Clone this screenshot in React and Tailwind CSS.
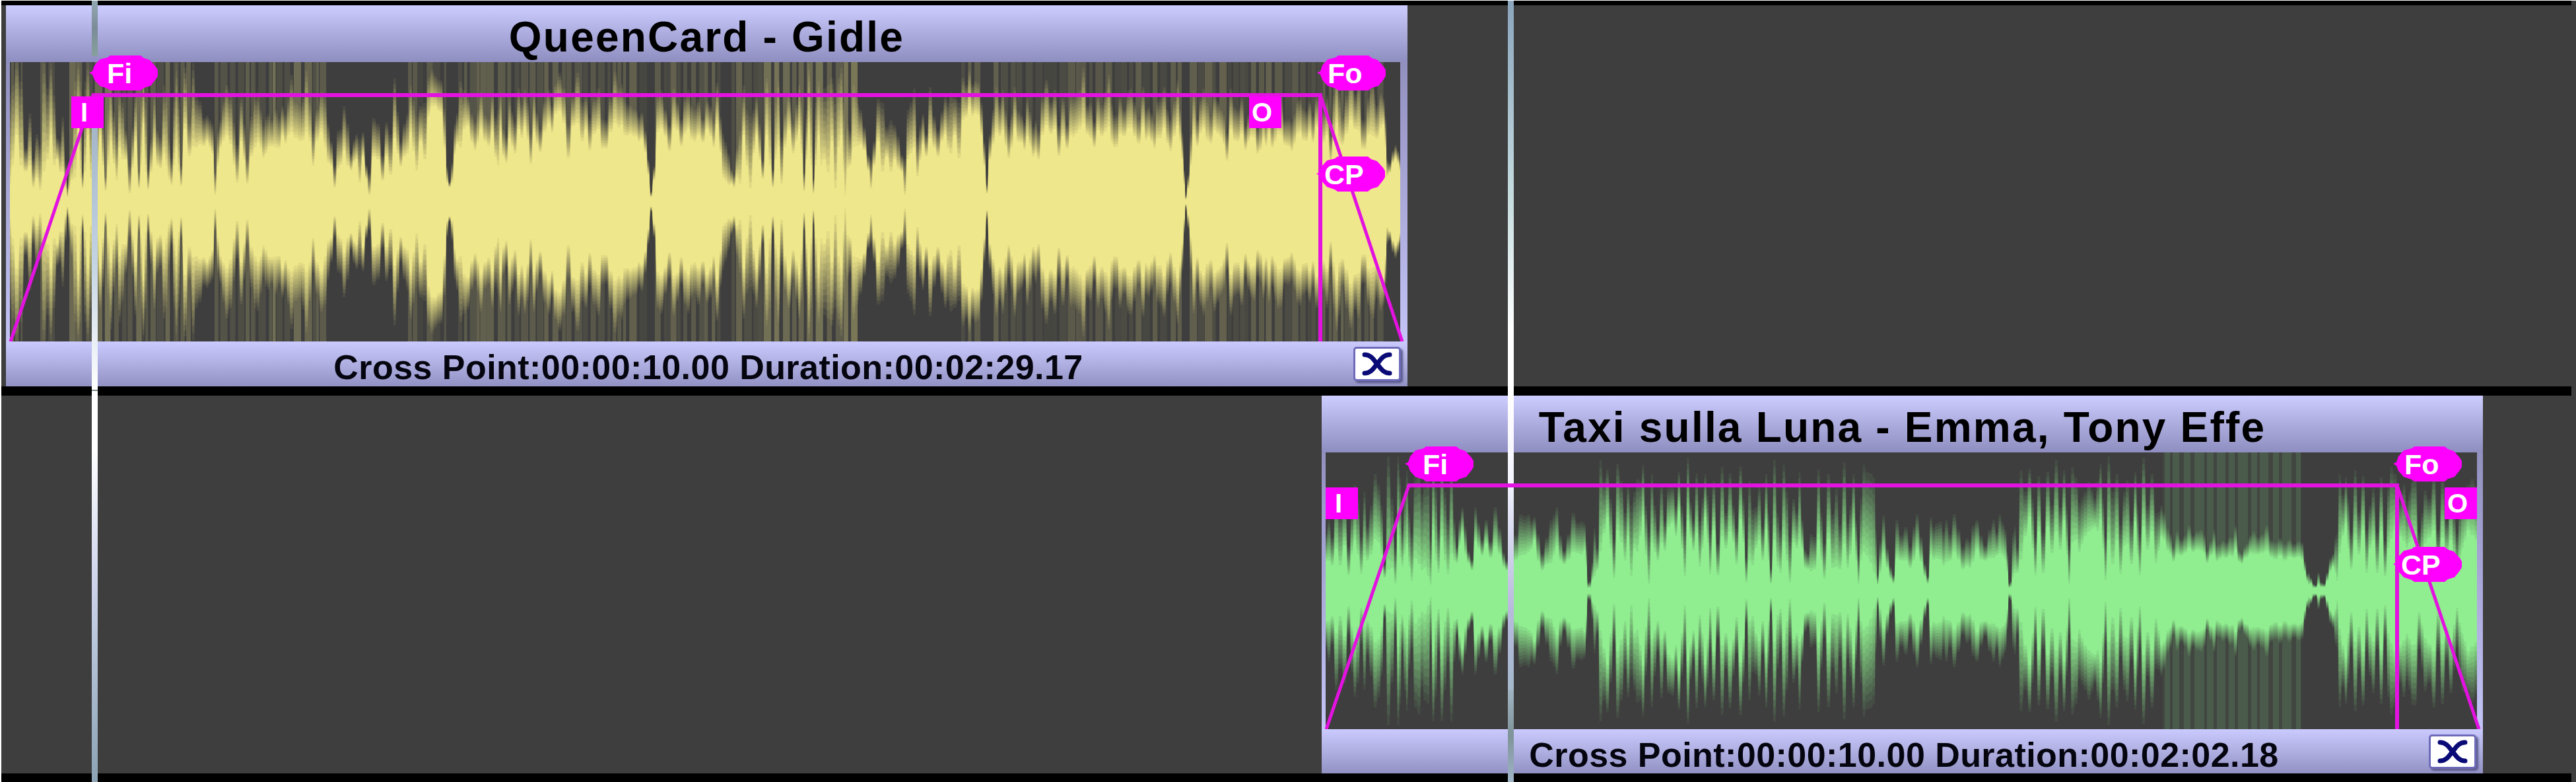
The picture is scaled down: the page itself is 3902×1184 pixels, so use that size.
import { useMemo } from 'react';

// Envelope points: "x core peak", x on the timeline, heights from the centre line.
// Between core and peak the wave fades out.
const QUEENCARD_WAVE = `
15 30 150, 19 60 165, 25 110 200, 32 60 170, 39 50 75, 46 60 125, 50 24 60, 56 40 95, 61 20 80, 66 50 195, 73 70 160, 77 110 200,
82 60 150, 87 70 90, 95 50 120, 100 22 55, 102 8 22, 105 20 50, 108 36 75, 114 40 170, 119 120 212, 122 40 170, 125 22 42, 129 50 170, 133 110 200, 138 40 150,
147 50 120, 152 110 150, 156 60 120, 160 18 34, 164 60 130, 168 100 180, 177 36 90, 181 90 170, 186 70 140, 190 70 100, 197 14 50, 205 100 160,
211 22 42, 214 60 150, 217 130 212, 221 50 150, 224 20 45, 234 90 150, 243 55 90, 249 80 165, 252 60 150, 260 28 60, 264 60 150, 267 90 200, 271 50 150, 274 26 50, 280 120 190, 287 75 110,
293 92 212, 297 90 150, 303 95 142, 309 92 118, 314 100 122, 322 80 110, 326 12 40, 330 60 100, 334 90 115, 343 110 165, 350 95 150, 359 32 80, 366 100 145,
374 30 60, 381 75 120, 387 90 150, 395 90 130, 403 80 120, 411 92 115, 418 90 130, 428 110 135, 437 110 145, 441 115 180, 448 105 140, 455 100 135, 464 115 185, 470 100 140, 474 60 100, 480 100 130,
487 115 155, 493 90 145, 497 65 110, 502 60 85, 507 24 50, 512 55 100, 521 85 135, 527 60 110, 532 52 68, 540 70 95, 545 32 88, 550 75 98, 555 38 52, 559 12 40, 566 75 118, 573 70 110,
580 35 65, 585 75 112, 592 45 95, 598 105 175, 607 58 84, 612 75 110, 618 80 125, 622 115 165, 631 52 120, 637 100 135, 644 70 140, 649 140 175, 660 158 178, 668 148 172, 674 90 132,
677 32 50, 681 24 28, 685 32 55, 689 78 110, 692 95 125, 698 90 170, 703 120 158, 709 125 152, 720 85 112, 728 120 155, 735 100 122, 746 115 150, 755 60 130, 758 115 155, 767 65 92, 772 105 145, 780 80 112,
786 120 160, 795 125 158, 804 62 95, 809 115 155, 818 82 102, 825 115 142, 832 130 158, 841 145 166, 848 150 182, 854 130 160, 861 72 108, 868 125 155, 875 130 182, 882 100 140, 888 120 150, 893 85 118, 900 112 145, 907 120 160,
918 88 115, 925 115 150, 932 130 184, 938 122 160, 946 110 144, 955 112 136, 964 108 130, 972 104 126, 978 82 100, 982 45 60, 986 8 14, 991 36 50, 996 115 150, 1002 122 158, 1008 108 130, 1014 84 108, 1021 122 160, 1026 118 140, 1032 92 116, 1043 120 158, 1052 100 130,
1058 110 145, 1065 98 116, 1071 120 142, 1077 108 135, 1081 90 112, 1086 128 168, 1092 82 120, 1095 40 96, 1104 28 68, 1108 30 46, 1112 24 38, 1116 40 75, 1121 30 100, 1127 110 165, 1131 60 130, 1137 22 120, 1142 80 130, 1146 110 150,
1151 70 110, 1155 38 58, 1162 110 175, 1166 60 150, 1171 24 45, 1175 70 140, 1179 92 170, 1184 30 90, 1189 90 125, 1195 118 150, 1202 80 110, 1211 120 165, 1214 80 140, 1218 18 40, 1222 70 130, 1225 120 195, 1229 60 150, 1232 14 32, 1236 60 140,
1240 110 170, 1244 60 150, 1248 70 160, 1255 48 165, 1260 100 175, 1266 22 150, 1270 90 175, 1275 110 190, 1278 50 140, 1280 10 95, 1284 55 110, 1288 60 100, 1293 90 165, 1298 92 145, 1304 95 130, 1309 85 105, 1316 52 66, 1319 22 60,
1324 60 85, 1330 100 145, 1337 50 140, 1343 75 105, 1350 50 115, 1355 70 108, 1361 55 92, 1366 50 66, 1371 12 60, 1375 70 130, 1380 80 140, 1385 90 160, 1390 42 90, 1398 95 124, 1403 75 95, 1409 105 162, 1415 90 120, 1421 75 100, 1427 100 128,
1432 112 150, 1440 80 155, 1446 110 150, 1453 72 140, 1459 135 175, 1464 140 165, 1473 142 166, 1482 144 168, 1487 110 140, 1491 60 85, 1495 14 25, 1499 70 95, 1505 95 130, 1509 115 162, 1515 108 140, 1519 118 158, 1528 72 106, 1537 122 162, 1548 98 122,
1556 108 146, 1565 75 105, 1573 70 100, 1579 110 150, 1585 126 172, 1592 112 140, 1598 120 158, 1604 76 108, 1610 108 146, 1617 88 108, 1622 110 148, 1630 112 152, 1636 120 158, 1641 130 190, 1647 112 136, 1652 105 140, 1658 90 112, 1663 118 150, 1669 108 136,
1675 116 156, 1680 124 180, 1688 90 122, 1696 112 150, 1703 108 130, 1710 122 158, 1718 108 140, 1725 96 116, 1732 124 162, 1740 108 134, 1749 88 112, 1757 105 146, 1764 122 162, 1773 84 116, 1779 108 142, 1784 126 172, 1788 100 130, 1791 70 98,
1794 28 45, 1796 4 8, 1800 22 38, 1804 60 95, 1808 112 158, 1814 92 116, 1823 122 160, 1829 102 140, 1834 96 120, 1840 118 154, 1850 106 130, 1858 68 96, 1865 120 160, 1875 100 130, 1881 112 146, 1887 86 106, 1895 108 134, 1900 106 140, 1905 80 106,
1914 104 136, 1922 112 142, 1932 100 138, 1940 110 148, 1947 94 116, 1957 84 112, 1965 112 142, 1974 102 132, 1984 114 142, 1994 124 150, 2000 112 145, 2005 98 126, 2010 110 150, 2016 66 92, 2020 100 150, 2025 130 182, 2029 100 160, 2033 94 118, 2040 112 150,
2046 135 178, 2053 120 152, 2058 118 164, 2064 88 116, 2072 110 145, 2080 108 165, 2086 104 136, 2092 122 154, 2096 128 146, 2099 90 120, 2101 42 60, 2105 48 55, 2110 64 72, 2114 72 80, 2118 64 72, 2121 52 60`;

const TAXI_WAVE = `
2008 50 80, 2013 50 100, 2018 42 75, 2024 70 140, 2030 42 110, 2037 75 130, 2043 26 62, 2048 60 115, 2052 84 150, 2057 60 130, 2062 28 75, 2067 58 140, 2071 50 90, 2077 60 120, 2083 85 165, 2089 80 150, 2093 60 120, 2097 22 38,
2103 35 190, 2109 38 130, 2114 12 60, 2118 92 190, 2121 55 160, 2124 40 85, 2128 60 140, 2131 77 170, 2135 40 110, 2138 16 80, 2144 54 165, 2150 44 175, 2158 38 155, 2164 24 160, 2167 10 75, 2171 100 185, 2175 50 150, 2179 30 85, 2184 90 185, 2189 50 140, 2193 28 100,
2199 62 185, 2203 50 100, 2207 46 62, 2211 75 100, 2215 96 118, 2220 60 90, 2224 46 56, 2230 34 44, 2235 82 118, 2240 70 95, 2245 58 72, 2251 78 100, 2258 55 70, 2265 74 118, 2272 60 88, 2278 40 54, 2282 34 42, 2290 42 80, 2297 52 78, 2303 58 108, 2310 60 105, 2316 64 108,
2324 84 104, 2330 50 80, 2336 34 52, 2343 44 75, 2350 46 100, 2358 74 118, 2364 50 78, 2369 44 56, 2376 52 80, 2383 64 110, 2390 62 96, 2396 60 98, 2401 68 95, 2403 40 70, 2405 5 12, 2409 5 14, 2412 18 40, 2415 24 88, 2420 34 60, 2424 65 185,
2430 95 155, 2435 122 172, 2440 70 130, 2445 22 72, 2450 100 180, 2456 80 155, 2462 50 110, 2466 90 150, 2471 24 120, 2476 70 140, 2480 64 158, 2485 90 155, 2489 124 178, 2493 60 120, 2498 12 82, 2502 80 165, 2507 64 120, 2511 50 86, 2517 80 152,
2522 66 98, 2527 105 145, 2534 112 148, 2539 90 120, 2543 132 168, 2548 70 120, 2552 24 90, 2557 116 188, 2561 88 125, 2565 66 98, 2570 96 166, 2575 40 98, 2579 70 130, 2583 122 165, 2587 80 135, 2590 28 85, 2596 100 155, 2602 26 66, 2609 90 175, 2614 70 110,
2621 98 166, 2626 80 120, 2630 44 88, 2637 118 176, 2641 80 130, 2645 14 45, 2650 50 155, 2655 42 115, 2660 70 118, 2665 84 148, 2670 50 90, 2676 102 165, 2679 50 110, 2682 12 32, 2688 84 185, 2693 40 110, 2697 30 85, 2702 82 178, 2707 50 140, 2711 14 75, 2717 80 130,
2722 70 110, 2726 84 168, 2730 70 100, 2734 38 58, 2739 36 52, 2743 32 80, 2749 36 76, 2755 84 172, 2759 50 110, 2763 20 66, 2770 86 165, 2776 38 108, 2782 40 145, 2787 36 92, 2794 78 182, 2799 38 95, 2803 60 120, 2808 104 165, 2812 50 100, 2815 12 50, 2819 50 130,
2823 64 178, 2828 58 168, 2834 46 166, 2839 30 160, 2842 20 85, 2844 10 22, 2848 30 70, 2853 62 106, 2859 38 60, 2864 20 34, 2868 12 22, 2873 54 100, 2880 50 78, 2887 50 90, 2894 38 62, 2899 50 90, 2904 68 108, 2910 48 76, 2916 24 38, 2920 12 20, 2925 60 104,
2933 54 95, 2940 52 98, 2948 48 100, 2954 50 80, 2960 64 108, 2967 52 86, 2973 36 62, 2980 42 74, 2988 48 92, 2995 68 100, 3001 52 78, 3007 50 64, 3014 54 86, 3020 54 100, 3025 58 82, 3029 62 108, 3034 58 96, 3038 52 86, 3041 30 55, 3043 5 10, 3046 6 14,
3049 22 80, 3052 30 90, 3056 30 60, 3061 52 170, 3068 90 140, 3075 122 172, 3079 70 130, 3083 26 75, 3088 98 162, 3095 30 82, 3102 106 168, 3108 62 120, 3115 98 185, 3121 68 118, 3127 116 170, 3131 60 120, 3134 12 62, 3139 80 175, 3145 84 160, 3150 64 124,
3158 90 140, 3165 98 154, 3173 105 130, 3178 98 155, 3182 118 180, 3186 70 130, 3189 18 75, 3194 84 190, 3200 44 140, 3207 84 165, 3212 28 92, 3218 75 140, 3222 78 156, 3229 44 98, 3235 114 168, 3238 60 120, 3241 26 80, 3247 106 188, 3253 68 120, 3260 98 165, 3266 46 110,
3274 90 120, 3278 84 110, 3284 66 88, 3292 48 62, 3298 60 84, 3304 58 72, 3310 62 78, 3316 70 92, 3322 64 78, 3328 68 84, 3335 66 86, 3343 46 56, 3349 58 70, 3354 62 86, 3362 52 66, 3372 54 68, 3378 58 76, 3386 68 92, 3392 48 56, 3400 54 62, 3408 62 78,
3414 60 84, 3420 60 76, 3427 62 80, 3434 66 92, 3440 56 72, 3447 52 68, 3454 58 74, 3461 50 66, 3468 56 72, 3475 54 66, 3482 56 70, 3488 52 68, 3491 32 42, 3495 16 24, 3497 10 26, 3501 12 18, 3504 5 10, 3508 5 8, 3512 10 26, 3516 6 12, 3521 6 10,
3525 16 26, 3530 32 46, 3534 40 52, 3538 30 76, 3540 16 80, 3544 62 165, 3549 90 135, 3554 112 160, 3557 70 130, 3561 36 82, 3568 84 170, 3573 60 110, 3580 100 162, 3585 30 85, 3590 70 120, 3595 84 145, 3601 30 82, 3607 98 160, 3613 24 70, 3618 70 150, 3622 86 175,
3628 100 165, 3635 90 130, 3642 82 150, 3650 80 140, 3658 88 162, 3665 36 82, 3673 78 142, 3680 88 130, 3687 100 165, 3693 36 85, 3700 88 160, 3706 60 98, 3713 84 145, 3722 28 80, 3730 70 142, 3738 100 150, 3745 92 158, 3752 84 146`;

// Full height stripes behind the wave: [from, to, strength]
const QUEENCARD_STRIPES = [
  [17, 34, 0.18], [61, 83, 0.2], [105, 290, 0.3], [325, 370, 0.16], [372, 497, 0.26], [618, 676, 0.16],
  [694, 980, 0.2], [992, 1094, 0.2], [1108, 1300, 0.32], [1456, 1488, 0.2], [1505, 1790, 0.2], [1802, 2096, 0.2]
];

const TAXI_COMB = [
  [3279, 3287], [3291, 3301], [3308, 3318], [3324, 3339], [3343, 3353], [3358, 3371], [3376, 3385], [3390, 3405],
  [3410, 3419], [3423, 3436], [3443, 3452], [3457, 3471], [3478, 3485]
];

const FADE_STEPS = 12;

const parseWave = (text) => text.trim().split(/,\s*/).map(p => p.trim().split(/\s+/).map(Number));

const makeRandom = (start) => {
  let seed = start;
  return () => {
    seed = (seed * 16807) % 2147483647;
    return seed / 2147483647;
  };
};

// Turn every point into a narrow column with soft shoulders
const toColumns = (points) => {
  const rand = makeRandom(23);
  const dense = [];
  points.forEach((point, i) => {
    dense.push(point);
    const next = points[i + 1];
    if (next && next[0] - point[0] > 7) {
      const core = (point[1] + next[1]) / 2;
      const peak = (point[2] + next[2]) / 2;
      const k = 0.82 + rand() * 0.3;
      dense.push([(point[0] + next[0]) / 2, core * k, peak * k]);
    }
  });

  return dense.flatMap(([x, core, peak], i) => {
    const left = i > 0 ? (x - dense[i - 1][0]) / 2 : 0;
    const right = i < dense.length - 1 ? (dense[i + 1][0] - x) / 2 : 0;
    const c = core * 0.92;
    const p = Math.min(210, peak * 1.07);
    return [[x - left * 0.65, c, p], [x + right * 0.65, c, p]];
  });
};

const outline = (points, t) => {
  const top = points.map(([x, core, peak]) => `${x.toFixed(1)} ${(-(core + (peak - core) * t)).toFixed(1)}`);
  const bottom = points.map(([x, core, peak]) => `${x.toFixed(1)} ${(core + (peak - core) * t).toFixed(1)}`).reverse();
  return `M${top.join('L')}L${bottom.join('L')}Z`;
};

const makeStripes = (zones) => {
  const stripes = [];
  const rand = makeRandom(7);
  zones.forEach(([from, to, strength]) => {
    let x = from;
    while (x < to) {
      const w = Math.min(4 + rand() * 8, to - x);
      stripes.push({ x, w, opacity: strength * (0.25 + rand() * 0.85) });
      x += w + rand() * 6;
    }
  });
  return stripes;
};

const Waveform = ({ clip }) => {
  const layers = useMemo(() => {
    const points = toColumns(parseWave(clip.wave));
    return Array.from({ length: FADE_STEPS }, (_, i) => ({
      d: outline(points, 1 - i / (FADE_STEPS - 1)),
      opacity: 1 / (FADE_STEPS - i)
    }));
  }, [clip.wave]);

  const { x, width, height, color, fadeIn, fadeOut } = clip;
  const half = height / 2;
  const level = 50 - half;

  return (
    <svg className="block h-full w-full overflow-visible" viewBox={`${x} ${-half} ${width} ${height}`} preserveAspectRatio="none">
      {clip.stripes.map((s, i) => (
        <rect key={i} x={s.x} y={-half} width={s.w} height={height} fill={color} opacity={s.opacity} />
      ))}
      {layers.map((l, i) => (
        <path key={i} d={l.d} fill={color} opacity={l.opacity} />
      ))}
      <g fill="none" stroke="#e312e0">
        <path d={`M${x + 1} ${half}L${fadeIn} ${level}M${fadeOut} ${level}L${x + width + 3} ${half}`} strokeWidth="5" />
        <path d={`M${fadeIn - 2} ${level}H${fadeOut + 3}M${fadeOut} ${level}V${half}`} strokeWidth="6" />
      </g>
    </svg>
  );
};

const Bubble = ({ className, children }) => (
  <div className={`absolute flex h-[53px] w-[104px] items-center ${className}`}>
    <svg className="absolute inset-0 h-full w-full" viewBox="0 0 104 53">
      <path d="M0 26L5 24L8 15L16 6L28 3L32 0H78L83 4L92 7L101 17L104 22V31L101 36L93 46L83 49L78 53H32L28 50L16 46L8 37L5 29Z" fill="#ff00ff" />
    </svg>
    <span className="relative pt-[2px] text-[43px] leading-none font-bold text-white">{children}</span>
  </div>
);

const Marker = ({ className, children }) => (
  <div className={`absolute flex h-[48px] w-[49px] bg-[#ff00ff] text-[40px] leading-[48px] font-bold text-white ${className}`}>
    {children}
  </div>
);

const CloseButton = () => (
  <button className="flex h-[52px] w-[72px] items-center justify-center rounded-[5px] border-[3px] border-[#6e6cba] bg-white shadow-[3px_3px_3px_#5c5a8c]">
    <svg className="h-[36px] w-[48px]" viewBox="0 0 48 36" fill="none" stroke="#0b0b78" strokeWidth="7" strokeLinecap="round">
      <path d="M5 4C16 4 20 14 24 18C28 22 32 32 43 32" />
      <path d="M43 4C32 4 28 14 24 18C20 22 16 32 5 32" />
    </svg>
  </button>
);

const Clip = ({ clip, className, waveClass, children }) => (
  <section className={`relative flex flex-col bg-linear-to-b from-[#8886b4] to-[#ccccff] ${className}`}>
    <h2 className="h-[86px] shrink-0 bg-linear-to-b from-[#cdcdff] via-[#adacdf] to-[#8f8ec0] text-center text-[64px] leading-[97px] font-bold tracking-[2.2px] whitespace-nowrap text-black">
      {clip.title}
    </h2>
    <div className={`shrink-0 bg-[#3e3e3e] ${waveClass}`}>
      <Waveform clip={clip} />
    </div>
    <footer className="relative h-0 min-h-0 grow bg-linear-to-b from-[#cacafe] via-[#b0afe2] to-[#9291c4]">
      <p className="pl-[5px] text-center text-[52px] leading-[79px] font-bold tracking-[0.45px] whitespace-nowrap text-[#05050f]">{clip.info}</p>
      <div className="absolute top-[8px] right-[10px]">
        <CloseButton />
      </div>
    </footer>
    {children}
  </section>
);

const QUEENCARD = {
  title: 'QueenCard - Gidle',
  info: 'Cross Point:00:00:10.00 Duration:00:02:29.17',
  wave: QUEENCARD_WAVE,
  stripes: makeStripes(QUEENCARD_STRIPES),
  color: '#efe78b',
  x: 15,
  width: 2106,
  height: 423,
  fadeIn: 141,
  fadeOut: 2000
};

const TAXI = {
  title: 'Taxi sulla Luna - Emma, Tony Effe',
  info: 'Cross Point:00:00:10.00 Duration:00:02:02.18',
  wave: TAXI_WAVE,
  stripes: [
    { x: 3276, w: 210, opacity: 0.05 },
    ...TAXI_COMB.map(([from, to]) => ({ x: from, w: to - from, opacity: 0.13 }))
  ],
  color: '#90ee90',
  x: 2008,
  width: 1744,
  height: 419,
  fadeIn: 2134,
  fadeOut: 3631
};

const App = () => {
  return (
    <div className="h-[1184px] w-[3902px] overflow-hidden bg-white pt-px pl-[2px] font-['Liberation_Sans',Arial,sans-serif]">
      <main className="relative flex h-[1183px] flex-col bg-[#3e3e3e]">
        {/* Track 1 */}
        <div className="mr-[7px] h-[7px] shrink-0 bg-black" />
        <div className="flex h-[577px] shrink-0 pl-[7px]">
          <Clip clip={QUEENCARD} className="w-[2123px]" waveClass="mr-[11px] ml-[6px] h-[423px]">
            <Bubble className="top-[76px] left-[126px] pl-[27px]">Fi</Bubble>
            <Marker className="top-[138px] left-[99px] pl-[14px]">I</Marker>
            <Bubble className="top-[76px] left-[1986px] pl-[16px]">Fo</Bubble>
            <Marker className="top-[138px] left-[1883px] pl-[4px]">O</Marker>
            <Bubble className="top-[229px] left-[1985px] pl-[12px]">CP</Bubble>
          </Clip>
        </div>
        <div className="mr-[7px] h-[14px] shrink-0 bg-black" />

        {/* Track 2 */}
        <div className="flex h-[572px] shrink-0 pl-[2000px]">
          <Clip clip={TAXI} className="w-[1759px]" waveClass="mr-[9px] ml-[6px] h-[419px]">
            <Bubble className="top-[77px] left-[126px] pl-[27px]">Fi</Bubble>
            <Marker className="top-[139px] left-[6px] pl-[14px]">I</Marker>
            <Bubble className="top-[77px] left-[1623px] pl-[17px]">Fo</Bubble>
            <Marker className="top-[139px] left-[1701px] pl-[4px]">O</Marker>
            <Bubble className="top-[229px] left-[1623px] pl-[12px]">CP</Bubble>
          </Clip>
        </div>
        <div className="mr-[7px] grow bg-black" />

        {/* Playheads */}
        <div className="absolute top-0 left-[137px] flex h-full w-[9px] flex-col">
          <div className="h-[84px] bg-linear-to-b from-[#93a8b2] via-[#7b8c98] to-[#87a09c]" />
          <div className="h-[109px]" />
          <div className="h-[396px] bg-linear-to-b from-[#a5b6c8] via-[#c3d3e2] to-white" />
          <div className="h-[2px] bg-[#808888]" />
          <div className="grow bg-linear-to-b from-white from-15% via-[#ccd3ea] via-50% to-[#8ba3b5]" />
        </div>
        <div className="absolute top-0 left-[2282px] flex h-full w-[9px] flex-col">
          <div className="h-[590px] bg-linear-to-b from-[#8ba5bd] via-[#c5dcdf] via-50% to-white to-85%" />
          <div className="h-[141px] bg-linear-to-b from-white to-[#f3f4ff]" />
          <div className="h-[6px]" />
          <div className="h-[306px] bg-linear-to-b from-[#eef0fb] via-[#b8b9dd] via-60% to-[#a5b9cc]" />
          <div className="grow bg-linear-to-b from-[#a1b4c4] via-[#7f9498] to-[#9fb4c8]" />
        </div>
      </main>
    </div>
  );
};

export default App;
